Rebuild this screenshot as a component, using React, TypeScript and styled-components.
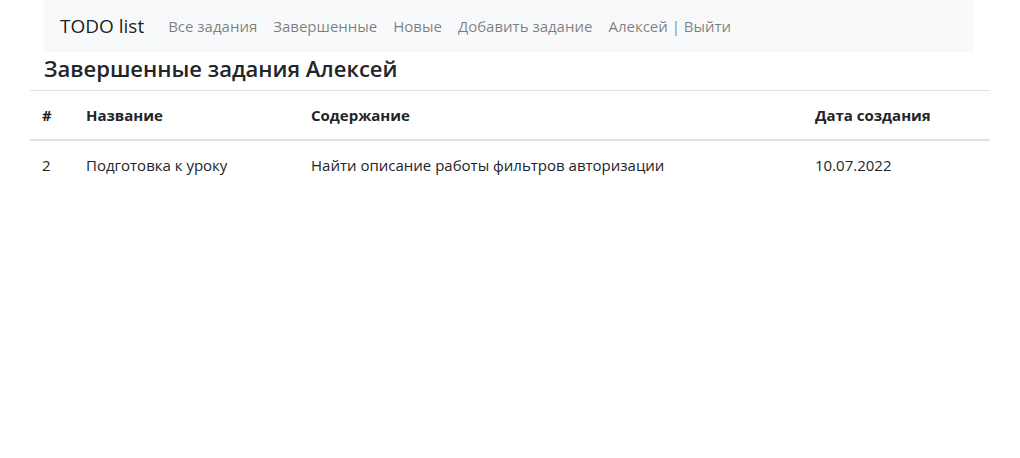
import React from "react";
import styled, { createGlobalStyle } from "styled-components";

const Global = createGlobalStyle`
  body {
    margin: 0;
    font-family: "Open Sans", "Noto Sans", sans-serif;
    font-size: 15px;
    line-height: 24px;
    color: #212529;
    background: #fff;
  }
  * { box-sizing: border-box; }
`;

const Page = styled.div`
  width: 960px;
  margin: 0 auto;
`;

const Container = styled.div`
  padding: 0 16px 0 14px;
`;

const Navbar = styled.nav`
  display: flex;
  align-items: center;
  height: 52px;
  padding: 0 16px;
  background: #f8f9fa;
`;

const Brand = styled.span`
  font-size: 19px;
  color: rgba(0, 0, 0, 0.9);
  margin-right: 16px;
  line-height: 30px;
`;

const NavLinks = styled.div`
  display: flex;
`;

const NavLink = styled.a`
  padding: 8px;
  color: rgba(0, 0, 0, 0.5);
  text-decoration: none;
  font-size: 15px;
`;

const Heading = styled.h3`
  margin: 0 0 8px;
  font-size: 22px;
  font-weight: 600;
  line-height: 28px;
  padding-top: 2px;
  color: #212529;
`;

const Table = styled.table`
  width: 960px;
  border-collapse: collapse;
  color: #212529;
`;

const Th = styled.th<{ $w?: number }>`
  text-align: left;
  font-weight: 700;
  padding: 12px;
  border-top: 1px solid #dee2e6;
  border-bottom: 2px solid #dee2e6;
  vertical-align: bottom;
  width: ${(p) => (p.$w ? `${p.$w}px` : "auto")};
`;

const Td = styled.td`
  padding: 12px;
  vertical-align: top;
`;

const links = ["Все задания", "Завершенные", "Новые", "Добавить задание", "Алексей | Выйти"];

export default function App() {
  return (
    <>
      <Global />
      <Page>
        <Container>
          <Navbar>
            <Brand>TODO list</Brand>
            <NavLinks>
              {links.map((l) => (
                <NavLink key={l} href="#">
                  {l}
                </NavLink>
              ))}
            </NavLinks>
          </Navbar>
          <Heading>Завершенные задания Алексей</Heading>
        </Container>
        <Table>
          <thead>
            <tr>
              <Th $w={44}>#</Th>
              <Th $w={225}>Название</Th>
              <Th $w={504}>Содержание</Th>
              <Th>Дата создания</Th>
            </tr>
          </thead>
          <tbody>
            <tr>
              <Td>2</Td>
              <Td>Подготовка к уроку</Td>
              <Td>Найти описание работы фильтров авторизации</Td>
              <Td>10.07.2022</Td>
            </tr>
          </tbody>
        </Table>
      </Page>
    </>
  );
}
